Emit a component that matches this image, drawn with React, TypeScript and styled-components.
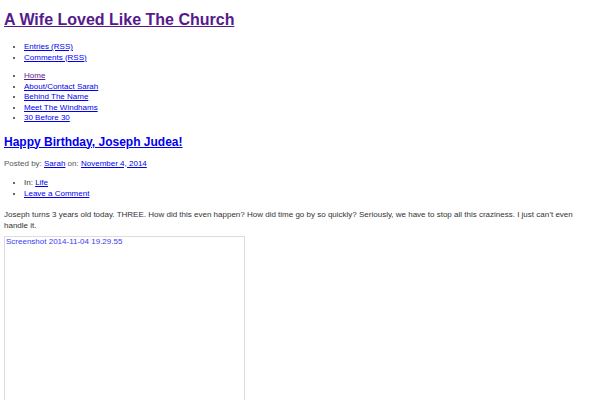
import React from "react";
import styled, { createGlobalStyle } from "styled-components";

const GlobalStyle = createGlobalStyle`
  body {
    margin: 0;
    background: #ffffff;
    font-family: "Liberation Sans", Arial, sans-serif;
    font-size: 8px;
    line-height: 10.5px;
    color: #333333;
  }
  a {
    color: #0000ee;
  }
`;

const Page = styled.div`
  padding: 0 4px;
  display: flex;
  flex-direction: column;
`;

const SiteTitle = styled.h1`
  margin: 10px 0 0;
  font-size: 16px;
  line-height: 20px;
  font-weight: bold;

  a {
    color: #551a8b;
  }
`;

const List = styled.ul<{ $top: number }>`
  margin: ${(p) => p.$top}px 0 0;
  padding-left: 20px;
  list-style: disc;
`;

const Item = styled.li<{ $visited?: boolean }>`
  a {
    color: ${(p) => (p.$visited ? "#551a8b" : "#0000ee")};
  }
`;

const PostTitle = styled.h2`
  margin: 11px 0 0;
  font-size: 12px;
  line-height: 15px;
  font-weight: bold;
`;

const Meta = styled.div`
  margin-top: 9px;
  color: #555555;
`;

const Text = styled.p`
  margin: 10px 0 0;
  line-height: 11px;
  color: #333333;
`;

const ImageFrame = styled.div`
  margin-top: 5px;
  width: 237px;
  height: 200px;
  border: 1px solid #dcdcdc;
  color: #3b3bf0;
  padding: 0 1px;
`;

const feeds = ["Entries (RSS)", "Comments (RSS)"];
const pages = [
  "Home",
  "About/Contact Sarah",
  "Behind The Name",
  "Meet The Windhams",
  "30 Before 30",
];

export default function App() {
  return (
    <>
      <GlobalStyle />
      <Page>
        <SiteTitle>
          <a href="#">A Wife Loved Like The Church</a>
        </SiteTitle>
        <List $top={12}>
          {feeds.map((f) => (
            <Item key={f}>
              <a href="#">{f}</a>
            </Item>
          ))}
        </List>
        <List $top={8}>
          {pages.map((p, i) => (
            <Item key={p} $visited={i === 0}>
              <a href="#">{p}</a>
            </Item>
          ))}
        </List>
        <PostTitle>
          <a href="#">Happy Birthday, Joseph Judea!</a>
        </PostTitle>
        <Meta>
          Posted by: <a href="#">Sarah</a> on: <a href="#">November 4, 2014</a>
        </Meta>
        <List $top={9}>
          <Item>
            In: <a href="#">Life</a>
          </Item>
          <Item>
            <a href="#">Leave a Comment</a>
          </Item>
        </List>
        <Text>
          Joseph turns 3 years old today. THREE. How did this even happen? How
          did time go by so quickly? Seriously, we have to stop all this
          craziness. I just can’t even handle it.
        </Text>
        <ImageFrame>Screenshot 2014-11-04 19.29.55</ImageFrame>
      </Page>
    </>
  );
}
